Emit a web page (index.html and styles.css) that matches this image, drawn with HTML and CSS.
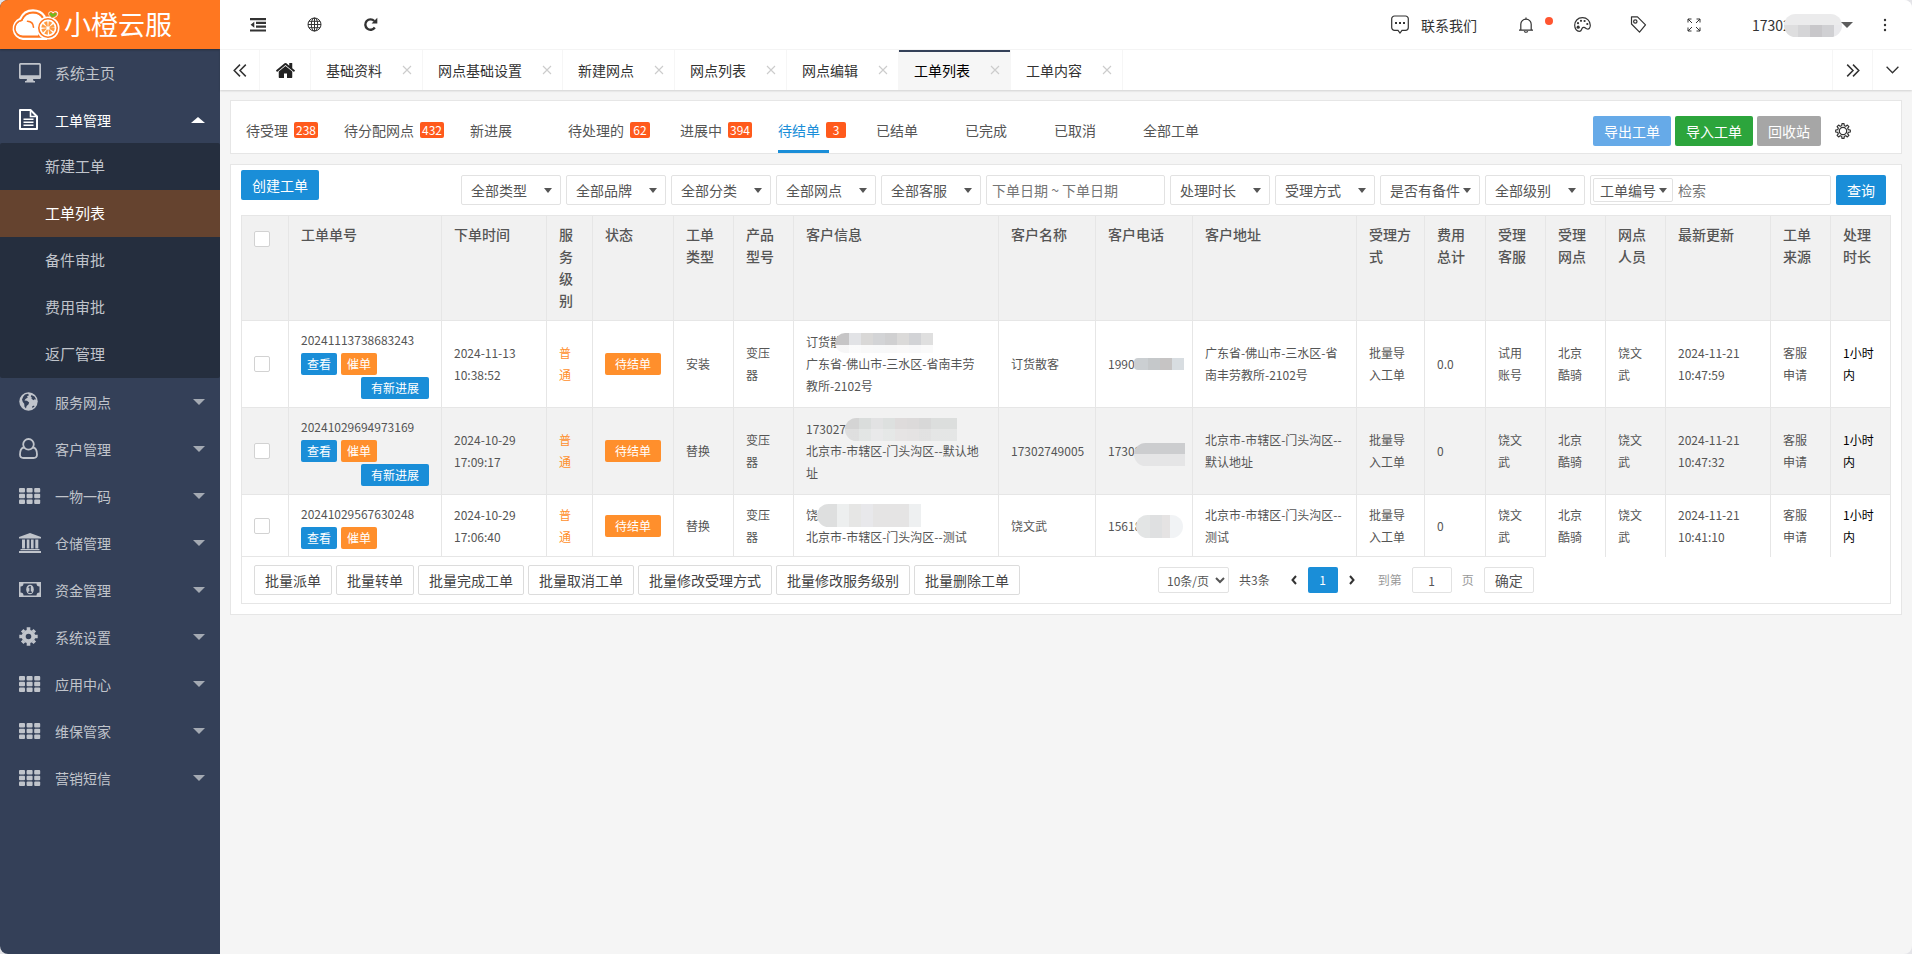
FILE: index.html
```html
<!DOCTYPE html>
<html lang="zh-CN">
<head>
    <meta charset="UTF-8">
    <meta name="viewport" content="width=device-width, initial-scale=1.0">
    <title>工单列表 | 小橙云服</title>
    <link rel="stylesheet" href="styles.css">
</head>
<body>
    <!-- shared icons -->
    <svg class="sprite" aria-hidden="true">
        <symbol id="i-grid" viewBox="0 0 22 16">
            <rect x="0" y="0" width="6" height="4.6" rx="1"/><rect x="7.6" y="0" width="6" height="4.6" rx="1"/><rect x="15.2" y="0" width="6" height="4.6" rx="1"/>
            <rect x="0" y="5.7" width="6" height="4.6" rx="1"/><rect x="7.6" y="5.7" width="6" height="4.6" rx="1"/><rect x="15.2" y="5.7" width="6" height="4.6" rx="1"/>
            <rect x="0" y="11.4" width="6" height="4.6" rx="1"/><rect x="7.6" y="11.4" width="6" height="4.6" rx="1"/><rect x="15.2" y="11.4" width="6" height="4.6" rx="1"/>
        </symbol>
        <symbol id="i-close" viewBox="0 0 10 10">
            <path d="M1 1l8 8M9 1L1 9" fill="none" stroke="currentColor" stroke-width="1.1"/>
        </symbol>
    </svg>

    <div class="app">
        <aside class="sidebar">
            <a href="#" class="logo">
                <svg width="50" height="32" viewBox="0 0 50 32" fill="none">
                    <path d="M12 29.5a10 10 0 0 1-2.5-19.3C12 4.5 17 1.8 22 1.8c5 0 8.800 2.200 11.200 5.700" stroke="#fff" stroke-width="3" stroke-linecap="round"/>
                    <path d="M12 29.500H36" stroke="#fff" stroke-width="3"/>
                    <path d="M12 26.500a7.300 7.300 0 0 1-.5-14.600C13 7 17.500 4.500 22 4.500c4 0 7.500 1.800 9.300 5.200L27 26.500z" fill="#fff"/>
                    <path d="M12 28a8.500 8.500 0 0 1-1.500-16.800C12.800 6 17.500 3.400 22 3.400c4.500 0 8 2 10.300 5.500M12 28h20M16.500 12.300c3.500.2 5.800 2.500 6 6" stroke="#ff7720" stroke-width="1.600" stroke-linecap="round"/>
                    <circle cx="37" cy="19" r="11.500" fill="#fff"/>
                    <circle cx="37" cy="19" r="9.200" fill="#fff" stroke="#ff7720" stroke-width="1.600"/>
                    <circle cx="37" cy="19" r="4.200" stroke="#ff9a40" stroke-width="5" stroke-dasharray="2.300 1"/>
                    <path d="M41 9.500c-4-2.500-5-6 -2-7 1-.4 2.500 0 3 .8 1.500-1.500 4-1.500 5 .2 1 2.500-1.500 5.500-6 6z" fill="#fff"/>
                    <path d="M41 8.500c-3-2-3.500-4-2-5 1.500-.6 2.500.5 3 1.500 1-1.800 3-1.800 3.800-.8.8 1.500-1.300 3.800-4.800 4.300z" fill="#6fbb1f" stroke="#ff7720" stroke-width=".8"/>
                </svg>
                <span class="logo-text">小橙云服</span>
            </a>
            <nav>
                <ul class="menu">
                    <li><a href="#" class="menu-item menu-home">
                        <svg width="22" height="20" viewBox="0 0 22 20"><path fill-rule="evenodd" d="M1.500 0h19A1.500 1.500 0 0 1 22 1.500v13a1.500 1.500 0 0 1-1.500 1.500H14l.6 2H16v1.500H6V18h1.400l.6-2H1.500A1.500 1.500 0 0 1 0 14.500v-13A1.500 1.500 0 0 1 1.500 0zM1.700 1.700v10.600h18.600V1.700z"/></svg>
                        <span>系统主页</span></a></li>
                    <li>
                        <a href="#" class="menu-item open">
                            <svg width="19" height="21" viewBox="0 0 19 21" fill="none" stroke="currentColor" stroke-width="2"><path d="M1 1h10.500L18 7.500V20H1z" stroke-linejoin="round"/><path d="M11.500 1v6.500H18" stroke-width="1.600"/><path d="M4.500 10.200h10M4.500 13.200h10M4.500 16.200h10" stroke-width="1.600"/></svg>
                            <span>工单管理</span><i class="caret"></i></a>
                        <ul class="submenu">
                            <li><a href="#">新建工单</a></li>
                            <li><a href="#" class="active">工单列表</a></li>
                            <li><a href="#">备件审批</a></li>
                            <li><a href="#">费用审批</a></li>
                            <li><a href="#">返厂管理</a></li>
                        </ul>
                    </li>
                    <li><a href="#" class="menu-item">
                        <svg width="19" height="19" viewBox="0 0 19 19"><circle cx="9.500" cy="9.500" r="9.200"/><path class="cut" d="M6 2.500l3-.8 1 1.500-2 1 .8 1.300L6.500 7l-1 1.500 2.500.3 2.200 1.700-.8 2-1.800 1.500-.6 2.500-1.500-1.800-.3-3L3.800 10 3 7.500l1.300-3zM12.500 3l3 1.500 1.700 3-1.500-.3-1.200 1-2-1.500.2-1.500-1-.7zM13 14.500l2-1 .5 1-2 1.500z"/></svg>
                        <span>服务网点</span><i class="caret"></i></a></li>
                    <li><a href="#" class="menu-item">
                        <svg width="19" height="21" viewBox="0 0 19 21" fill="none" stroke="currentColor" stroke-width="1.800"><circle cx="9.500" cy="6.300" r="5.300"/><path d="M4.900 9.500C2.300 10 1 13 1 16.500 1 18.700 2.300 20 4.500 20h10c2.200 0 3.500-1.300 3.500-3.500 0-3.500-1.300-6.500-3.900-7"/></svg>
                        <span>客户管理</span><i class="caret"></i></a></li>
                    <li><a href="#" class="menu-item"><svg width="22" height="16"><use href="#i-grid"/></svg><span>一物一码</span><i class="caret"></i></a></li>
                    <li><a href="#" class="menu-item">
                        <svg width="22" height="20" viewBox="0 0 22 20"><path d="M11 0l11 4v1.500H0V4zM3 6.500h3v9H3zM7.800 6.500h2.600v9H7.800zM12 6.500h2.600v9H12zM16.300 6.500h3v9h-3zM1.500 16h19v1.300h-19zM0 18h22v2H0z"/></svg>
                        <span>仓储管理</span><i class="caret"></i></a></li>
                    <li><a href="#" class="menu-item">
                        <svg width="22" height="15" viewBox="0 0 22 15"><path fill-rule="evenodd" d="M0 0h22v15H0zM4.500 1.500a3 3 0 0 1-3 3v6a3 3 0 0 1 3 3h13a3 3 0 0 1 3-3v-6a3 3 0 0 1-3-3z"/><ellipse cx="11" cy="7.500" rx="3.800" ry="4.800"/><path class="cut" d="M9.500 5l1.300-1h1v5.500h1V11h-3.500V9.500h1.100V5.800l-.9.400z"/></svg>
                        <span>资金管理</span><i class="caret"></i></a></li>
                    <li><a href="#" class="menu-item">
                        <svg width="19" height="19" viewBox="-9.500 -9.500 19 19"><circle r="4.800" fill="none" stroke="currentColor" stroke-width="4"/><path d="M0-9.200V-6M0 9.200V6M-9.200 0H-6M9.200 0H6M-6.300-6.300L-4.500-4.500M6.300 6.300L4.500 4.500M-6.300 6.300L-4.500 4.500M6.300-6.300L4.500-4.500" stroke="currentColor" stroke-width="3.600"/></svg>
                        <span>系统设置</span><i class="caret"></i></a></li>
                    <li><a href="#" class="menu-item"><svg width="22" height="16"><use href="#i-grid"/></svg><span>应用中心</span><i class="caret"></i></a></li>
                    <li><a href="#" class="menu-item"><svg width="22" height="16"><use href="#i-grid"/></svg><span>维保管家</span><i class="caret"></i></a></li>
                    <li><a href="#" class="menu-item"><svg width="22" height="16"><use href="#i-grid"/></svg><span>营销短信</span><i class="caret"></i></a></li>
                </ul>
            </nav>
        </aside>

        <div class="main">
            <header class="topbar">
                <div class="tools">
                    <button aria-label="收起菜单"><svg width="16" height="14" viewBox="0 0 16 14"><path d="M0 0h16v2.200H0zM6 3.800h10V6H6zM6 7.600h10v2.200H6zM0 11.400h16v2.200H0zM4.300 3.800v6L.6 6.800z"/></svg></button>
                    <button aria-label="前台"><svg width="15" height="15" viewBox="0 0 15 15" fill="none" stroke="currentColor"><circle cx="7.500" cy="7.500" r="6.500"/><ellipse cx="7.500" cy="7.500" rx="3.200" ry="6.500"/><path d="M1 7.500h13M7.500 1v13M2 4.300h11M2 10.700h11"/></svg></button>
                    <button aria-label="刷新"><svg width="15" height="15" viewBox="0 0 15 15"><path d="M11.800 10.500A5.200 5.200 0 1 1 11.300 4" fill="none" stroke="currentColor" stroke-width="2.400"/><path d="M14.300 .8v5.700H8.600z"/></svg></button>
                </div>
                <div class="tools tools-right">
                    <a href="#" class="contact">
                        <svg width="18" height="19" viewBox="0 0 18 19" fill="none" stroke="currentColor" stroke-width="1.200"><path d="M3.500 1h11A2.800 2.800 0 0 1 17.300 3.800v8.700a2.800 2.800 0 0 1-2.800 2.800H11L9 18l-2-2.700H3.500A2.800 2.800 0 0 1 .7 12.500V3.800A2.800 2.800 0 0 1 3.500 1z"/><path d="M4 8h2M8 8h2M12 8h2" stroke-width="2"/></svg>
                        联系我们</a>
                    <button class="bell" aria-label="消息"><svg width="16" height="16" viewBox="0 0 16 16" fill="none" stroke="currentColor" stroke-width="1.200"><path d="M1 13.200h14M2.800 13V7.300a5.200 5.200 0 0 1 10.400 0V13M8 2V.5M6.300 14.200c.5 1.400 2.900 1.400 3.400 0"/></svg><i class="dot"></i></button>
                    <button aria-label="主题"><svg width="17" height="15" viewBox="0 0 17 15"><path d="M8.500.7C3.500.7.700 4.200.700 8.300c0 3.500 2 6 4.600 6 2.300 0 2-1.700 2.800-3 1.300-2 3-.5 4.600.5 2 1 3.600-.7 3.600-3.500 0-4.500-3.300-7.600-7.800-7.600z" fill="none" stroke="currentColor" stroke-width="1.200"/><circle cx="4.200" cy="10.200" r="1.600"/><circle cx="4" cy="6.200" r="1.100"/><circle cx="7" cy="3.800" r="1.100"/><circle cx="10.600" cy="4" r="1.100"/><circle cx="13.300" cy="7" r="1.100"/></svg></button>
                    <button aria-label="便签"><svg width="17" height="17" viewBox="0 0 17 17" fill="none" stroke="currentColor" stroke-width="1.200"><path d="M1.500.8h6l8 8-6 7.400-8-8.200z" stroke-linejoin="round"/><circle cx="5.300" cy="5.500" r="1.700"/></svg></button>
                    <button aria-label="全屏"><svg width="14" height="14" viewBox="0 0 14 14" fill="none" stroke="currentColor"><path d="M1 4.500V1h3.500M1 1l4 4M9.500 1H13v3.500M13 1L9 5M1 9.500V13h3.500M1 13l4-4M9.500 13H13V9.500M13 13L9 9"/></svg></button>
                    <a href="#" class="user"><span class="masked">17302<i class="mosaic m-user"></i></span><i class="caret"></i></a>
                    <button class="more" aria-label="更多"><svg width="4" height="14" viewBox="0 0 4 14"><circle cx="2" cy="2" r="1.200"/><circle cx="2" cy="7" r="1.200"/><circle cx="2" cy="12" r="1.200"/></svg></button>
                </div>
            </header>

            <div class="tabbar">
                <button class="tab-ctrl" aria-label="向左"><svg width="14" height="13" viewBox="0 0 14 13" fill="none" stroke="currentColor" stroke-width="1.500"><path d="M7 .6L1.200 6.500 7 12.400M12.800.6L7 6.500l5.800 5.900"/></svg></button>
                <a href="#" class="tab tab-home" aria-label="首页"><svg width="21" height="21" viewBox="0 0 1792 1792"><path d="M1472 992v480q0 26-19 45t-45 19h-384v-384h-256v384h-384q-26 0-45-19t-19-45v-480q0-1 .5-3t.5-3l575-474 575 474q1 2 1 6zm223-69l-62 74q-8 9-21 11h-3q-13 0-21-7l-692-577-692 577q-12 8-24 7-13-2-21-11l-62-74q-8-10-7-23.500t11-21.500l719-599q32-26 76-26t76 26l244 204v-195q0-14 9-23t23-9h192q14 0 23 9t9 23v408l219 182q10 8 11 21.500t-7 23.500z"/></svg></a>
                <a href="#" class="tab">基础资料<svg width="10" height="10"><use href="#i-close"/></svg></a>
                <a href="#" class="tab">网点基础设置<svg width="10" height="10"><use href="#i-close"/></svg></a>
                <a href="#" class="tab">新建网点<svg width="10" height="10"><use href="#i-close"/></svg></a>
                <a href="#" class="tab">网点列表<svg width="10" height="10"><use href="#i-close"/></svg></a>
                <a href="#" class="tab">网点编辑<svg width="10" height="10"><use href="#i-close"/></svg></a>
                <a href="#" class="tab active">工单列表<svg width="10" height="10"><use href="#i-close"/></svg></a>
                <a href="#" class="tab">工单内容<svg width="10" height="10"><use href="#i-close"/></svg></a>
                <div class="tab-end">
                    <button class="tab-ctrl" aria-label="向右"><svg width="14" height="13" viewBox="0 0 14 13" fill="none" stroke="currentColor" stroke-width="1.500"><path d="M1.200.6L7 6.500l-5.800 5.900M7 .6l5.800 5.900L7 12.400"/></svg></button>
                    <button class="tab-ctrl" aria-label="展开"><svg width="13" height="8" viewBox="0 0 13 8" fill="none" stroke="currentColor" stroke-width="1.300"><path d="M.6.8l5.900 6 5.900-6"/></svg></button>
                </div>
            </div>

            <main class="content">
                <section class="card status-card">
                    <nav class="status-tabs">
                        <a href="#">待受理<span class="slot"><b>238</b></span></a>
                        <a href="#">待分配网点<span class="slot"><b>432</b></span></a>
                        <a href="#">新进展<span class="slot"></span></a>
                        <a href="#">待处理的<span class="slot"><b>62</b></span></a>
                        <a href="#">进展中<span class="slot"><b>394</b></span></a>
                        <a href="#" class="active">待结单<span class="slot"><b>3</b></span></a>
                        <a href="#" class="plain">已结单</a>
                        <a href="#" class="plain">已完成</a>
                        <a href="#" class="plain">已取消</a>
                        <a href="#" class="plain">全部工单</a>
                    </nav>
                    <div class="actions">
                        <button class="btn btn-export">导出工单</button>
                        <button class="btn btn-import">导入工单</button>
                        <button class="btn btn-recycle">回收站</button>
                        <button class="btn-set" aria-label="设置"><svg width="16" height="16" viewBox="-8 -8 16 16" fill="none" stroke="currentColor" stroke-width="1.200"><circle r="3.700"/><path d="M-1.300-5.300L-1-7.300H1L1.300-5.300 2.800-4.700 4.400-5.900 5.900-4.400 4.700-2.800 5.300-1.300 7.300-1V1L5.300 1.300 4.700 2.800 5.900 4.400 4.400 5.900 2.800 4.700 1.300 5.300 1 7.300H-1L-1.300 5.300-2.800 4.700-4.400 5.900-5.900 4.400-4.700 2.800-5.300 1.300-7.300 1V-1L-5.300-1.300-4.700-2.800-5.900-4.400-4.400-5.900-2.800-4.700z" stroke-linejoin="round"/></svg></button>
                    </div>
                </section>

                <section class="card list-card">
                    <div class="toolbar">
                        <button class="btn btn-primary">创建工单</button>
                        <form class="filters">
                            <select aria-label="类型"><option>全部类型</option></select>
                            <select aria-label="品牌"><option>全部品牌</option></select>
                            <select aria-label="分类"><option>全部分类</option></select>
                            <select aria-label="网点"><option>全部网点</option></select>
                            <select aria-label="客服"><option>全部客服</option></select>
                            <input type="text" class="date" aria-label="下单日期" placeholder="下单日期 ~ 下单日期">
                            <select aria-label="处理时长"><option>处理时长</option></select>
                            <select aria-label="受理方式"><option>受理方式</option></select>
                            <select aria-label="备件"><option>是否有备件</option></select>
                            <select aria-label="级别"><option>全部级别</option></select>
                            <div class="search">
                                <select aria-label="检索字段"><option>工单编号</option></select>
                                <input type="text" aria-label="检索" placeholder="检索">
                            </div>
                            <button type="button" class="btn btn-primary">查询</button>
                        </form>
                    </div>

                    <table class="orders">
                        <colgroup>
                            <col class="w-check"><col class="w-no"><col class="w-time"><col class="w-level"><col class="w-state">
                            <col class="w-s"><col class="w-s"><col><col class="w-name"><col class="w-name"><col class="w-addr">
                            <col class="w-way"><col class="w-cost"><col class="w-s"><col class="w-s"><col class="w-s"><col class="w-time"><col class="w-s"><col class="w-s">
                        </colgroup>
                        <thead>
                            <tr>
                                <th><input type="checkbox" aria-label="全选"></th>
                                <th>工单单号</th><th>下单时间</th><th>服务级别</th><th>状态</th><th>工单类型</th><th>产品型号</th>
                                <th>客户信息</th><th>客户名称</th><th>客户电话</th><th>客户地址</th><th>受理方式</th><th>费用总计</th>
                                <th>受理客服</th><th>受理网点</th><th>网点人员</th><th>最新更新</th><th>工单来源</th><th>处理时长</th>
                            </tr>
                        </thead>
                        <tbody>
                            <tr>
                                <td><input type="checkbox" aria-label="选择 20241113738683243"></td>
                                <td><div class="order">20241113738683243
                                    <div class="order-btns"><button class="tag blue">查看</button><button class="tag">催单</button></div>
                                    <button class="tag wide blue">有新进展</button></div></td>
                                <td>2024-11-13 10:38:52</td>
                                <td class="level">普通</td>
                                <td><span class="tag wide">待结单</span></td>
                                <td>安装</td>
                                <td>变压器</td>
                                <td><span class="masked">订货散<i class="mosaic m-info1"></i></span><br>广东省-佛山市-三水区-省南丰劳教所-2102号</td>
                                <td class="one-line">订货散客</td>
                                <td><span class="masked">19902<i class="mosaic m-tel1"></i></span></td>
                                <td>广东省-佛山市-三水区-省南丰劳教所-2102号</td>
                                <td>批量导入工单</td>
                                <td>0.0</td>
                                <td>试用账号</td>
                                <td>北京酷骑</td>
                                <td>饶文武</td>
                                <td>2024-11-21 10:47:59</td>
                                <td>客服申请</td>
                                <td class="cost-time">1小时内</td>
                            </tr>
                            <tr>
                                <td><input type="checkbox" aria-label="选择 20241029694973169"></td>
                                <td><div class="order">20241029694973169
                                    <div class="order-btns"><button class="tag blue">查看</button><button class="tag">催单</button></div>
                                    <button class="tag wide blue">有新进展</button></div></td>
                                <td>2024-10-29 17:09:17</td>
                                <td class="level">普通</td>
                                <td><span class="tag wide">待结单</span></td>
                                <td>替换</td>
                                <td>变压器</td>
                                <td><span class="masked">173027<i class="mosaic m-info2"></i></span><br>北京市-市辖区-门头沟区--默认地址</td>
                                <td class="one-line">17302749005</td>
                                <td><span class="masked">17302<i class="mosaic m-tel2"></i></span></td>
                                <td>北京市-市辖区-门头沟区--默认地址</td>
                                <td>批量导入工单</td>
                                <td>0</td>
                                <td>饶文武</td>
                                <td>北京酷骑</td>
                                <td>饶文武</td>
                                <td>2024-11-21 10:47:32</td>
                                <td>客服申请</td>
                                <td class="cost-time">1小时内</td>
                            </tr>
                            <tr>
                                <td><input type="checkbox" aria-label="选择 20241029567630248"></td>
                                <td><div class="order">20241029567630248
                                    <div class="order-btns"><button class="tag blue">查看</button><button class="tag">催单</button></div></div></td>
                                <td>2024-10-29 17:06:40</td>
                                <td class="level">普通</td>
                                <td><span class="tag wide">待结单</span></td>
                                <td>替换</td>
                                <td>变压器</td>
                                <td><span class="masked">饶<i class="mosaic m-info3"></i></span><br>北京市-市辖区-门头沟区--测试</td>
                                <td class="one-line">饶文武</td>
                                <td><span class="masked">15618<i class="mosaic m-tel3"></i></span></td>
                                <td>北京市-市辖区-门头沟区--测试</td>
                                <td>批量导入工单</td>
                                <td>0</td>
                                <td>饶文武</td>
                                <td>北京酷骑</td>
                                <td>饶文武</td>
                                <td>2024-11-21 10:41:10</td>
                                <td>客服申请</td>
                                <td class="cost-time">1小时内</td>
                            </tr>
                        </tbody>
                    </table>

                    <div class="table-foot">
                        <div class="batch">
                            <button class="btn btn-plain">批量派单</button>
                            <button class="btn btn-plain">批量转单</button>
                            <button class="btn btn-plain">批量完成工单</button>
                            <button class="btn btn-plain">批量取消工单</button>
                            <button class="btn btn-plain">批量修改受理方式</button>
                            <button class="btn btn-plain">批量修改服务级别</button>
                            <button class="btn btn-plain">批量删除工单</button>
                        </div>
                        <div class="pager">
                            <select aria-label="每页条数"><option>10条/页</option></select>
                            <span class="total">共3条</span>
                            <button class="arrow" aria-label="上一页"><svg width="6" height="10" viewBox="0 0 6 10" fill="none" stroke="currentColor" stroke-width="2"><path d="M5 1L1.500 5 5 9"/></svg></button>
                            <button class="current">1</button>
                            <button class="arrow" aria-label="下一页"><svg width="6" height="10" viewBox="0 0 6 10" fill="none" stroke="currentColor" stroke-width="2"><path d="M1 1l3.500 4L1 9"/></svg></button>
                            <label for="page-no">到第</label>
                            <input type="text" id="page-no" value="1">
                            <label for="page-no">页</label>
                            <button class="go">确定</button>
                        </div>
                    </div>
                </section>
            </main>
        </div>
    </div>
</body>
</html>
```
FILE: styles.css
```css
:root {
    --blue: #1a8ed8;
    --orange: #ff8f2c;
    --red: #ff5a1c;
    --side: #344058;
    --side-dark: #252e3e;
    --line: #e6e6e6;
    --text: #555;
}

* {
    box-sizing: border-box;
}

body {
    margin: 0;
    font: 14px/22px "Noto Sans CJK SC", sans-serif;
    color: var(--text);
    background-color: #e4e4e8;
}

ul {
    list-style: none;
    margin: 0;
    padding: 0;
}

a {
    color: inherit;
    text-decoration: none;
}

button, input, select {
    font: inherit;
    color: inherit;
    margin: 0;
}

button {
    border: none;
    background: none;
    padding: 0;
    cursor: pointer;
}

svg {
    fill: currentColor;
    flex: none;
}

svg[fill="none"] {
    fill: none;
}

.sprite {
    display: none;
}

.app {
    display: flex;
    min-height: 100vh;
    border-radius: 8px;
    overflow: hidden;
    background-color: #f5f5f5;
}

/* sidebar */
.sidebar {
    width: 220px;
    flex: none;
    background-color: var(--side);
    color: #c0c4cb;
}

.logo {
    display: flex;
    align-items: center;
    gap: 3px;
    height: 49px;
    padding-left: 11px;
    background-color: #ff7720;
    color: #fff;
    box-shadow: 0 1px 2px rgba(0, 0, 0, 0.3);
}

.logo-text {
    font-size: 27px;
    line-height: 46px;
    padding-bottom: 2px;
}

.menu-item {
    display: flex;
    align-items: center;
    height: 47px;
    padding: 0 15px 0 19px;
}

.menu-item span {
    flex: 1;
    padding-top: 1px;
}

.menu-item svg {
    margin-right: 14px;
}

.menu-item svg[width="19"] {
    margin-right: 17px;
}

.menu-home {
    font-size: 15px;
}

.menu-item.open {
    color: #fff;
}

.cut {
    fill: var(--side);
}

.caret {
    border: 6px solid transparent;
    border-top-color: currentColor;
    border-bottom: none;
    opacity: 0.8;
}

.open .caret {
    border-top: none;
    border-bottom: 6px solid #fff;
    opacity: 1;
    border-left-width: 7px;
    border-right-width: 7px;
}

.submenu {
    background-color: var(--side-dark);
    font-size: 15px;
    border-radius: 2px;
}

.submenu a {
    display: block;
    height: 47px;
    padding-left: 45px;
    line-height: 46px;
}

.submenu .active {
    background-color: #65432f;
    color: #fff;
}

.main {
    flex: 1;
    min-width: 0;
}

/* top bar */
.topbar {
    display: flex;
    justify-content: space-between;
    height: 50px;
    padding: 0 10px;
    background-color: #fff;
    border-bottom: 1px solid #f6f6f6;
    color: #333;
}

.tools {
    display: flex;
    align-items: center;
}

.tools button {
    display: flex;
    align-items: center;
    justify-content: center;
    width: 56px;
    height: 49px;
}

.contact {
    display: flex;
    align-items: center;
    gap: 12px;
    margin-right: 21px;
}

.tools .bell {
    position: relative;
}

.dot {
    position: absolute;
    top: 17px;
    right: 1px;
    width: 8px;
    height: 8px;
    border-radius: 50%;
    background-color: #ff5530;
}

.user {
    display: flex;
    align-items: center;
    justify-content: space-between;
    width: 101px;
    margin-left: 30px;
}

.tools .more {
    width: 35px;
    margin-left: 14px;
}

.tabbar {
    display: flex;
    height: 40px;
    background-color: #fff;
    color: #333;
    box-shadow: 0 1px 2px rgba(0, 0, 0, 0.15);
}

.tab-ctrl {
    display: flex;
    align-items: center;
    justify-content: center;
    width: 40px;
    border-right: 1px solid #f6f6f6;
}

.tab {
    display: flex;
    align-items: center;
    gap: 20px;
    padding: 0 10px 0 15px;
    border-right: 1px solid #f6f6f6;
    white-space: nowrap;
}

.tab svg {
    color: #ccc;
}

.tab-home {
    width: 51px;
    padding: 0;
    justify-content: center;
}

.tab-home svg {
    color: #222;
}

.tab.active {
    background-color: #f6f6f6;
    box-shadow: inset 0 2px 0 #334058;
    color: #000;
}

.tab-end {
    display: flex;
    margin-left: auto;
}

.tab-end .tab-ctrl {
    border-right: none;
    border-left: 1px solid #f6f6f6;
}

/* content */
.content {
    padding: 10px;
}

.card {
    background-color: #fff;
    border: 1px solid var(--line);
    margin-bottom: 10px;
}

.status-card {
    display: flex;
    justify-content: space-between;
    padding: 0 50px 0 15px;
    height: 54px;
}

.status-tabs {
    display: flex;
    white-space: nowrap;
}

.status-tabs a {
    display: flex;
    align-items: center;
    height: 52px;
    padding-top: 6px;
}

.slot {
    display: flex;
    width: 56px;
    padding-left: 6px;
}

.slot b {
    min-width: 20px;
    padding: 0 2px;
    border-radius: 2px;
    background-color: var(--red);
    color: #fff;
    font-size: 12px;
    font-weight: 400;
    line-height: 16px;
    text-align: center;
}

.status-tabs .active {
    color: var(--blue);
    background: linear-gradient(var(--blue), var(--blue)) left bottom / 51px 3px no-repeat;
}

.plain {
    margin-right: 47px;
}

.actions {
    display: flex;
    align-items: center;
    gap: 4px;
    padding-top: 8px;
}

.btn {
    height: 30px;
    padding: 0 11px;
    border-radius: 2px;
    color: #fff;
    line-height: 28px;
    white-space: nowrap;
}

.btn-export {
    background-color: #66aae8;
}

.btn-import {
    background-color: #2ca53c;
}

.btn-recycle {
    background-color: #a6a6a6;
}

.btn-set {
    display: flex;
    margin-left: 10px;
    color: #333;
}

.btn-primary {
    background-color: var(--blue);
}

.btn-plain {
    padding: 0 10px;
    background-color: #fff;
    border: 1px solid #dcdcdc;
    color: #444;
    line-height: 26px;
}

.list-card {
    padding: 5px 10px 10px;
}

.toolbar {
    display: flex;
    justify-content: space-between;
    align-items: flex-start;
    padding-bottom: 10px;
}

.filters {
    display: flex;
    gap: 5px;
    padding: 5px 5px 0 0;
}

.filters select, .filters input, .search {
    height: 30px;
    border: 1px solid #e2e2e2;
    border-radius: 2px;
    background-color: #fff;
}

.filters select {
    appearance: none;
    width: 100px;
    padding: 0 0 0 9px;
    background: #fff url("data:image/svg+xml,%3Csvg xmlns='http://www.w3.org/2000/svg' width='8' height='5'%3E%3Cpath d='M0 0h8L4 5z' fill='%23555'/%3E%3C/svg%3E") right 8px center no-repeat;
}

.filters .date {
    width: 179px;
    padding: 0 5px;
}

.filters input::placeholder {
    color: #757575;
    opacity: 1;
}

.search {
    display: flex;
    align-items: center;
    width: 241px;
    padding-left: 2px;
}

.search select {
    width: 80px;
    height: 24px;
    padding-left: 6px;
    background-position: right 5px center;
}

.search input {
    flex: 1;
    min-width: 0;
    height: 28px;
    padding: 0 5px;
    border: none;
}

/* orders table */
.orders {
    width: 100%;
    table-layout: fixed;
    border-collapse: collapse;
}

.w-check { width: 47px; }
.w-no { width: 153px; }
.w-time { width: 105px; }
.w-level { width: 46px; }
.w-state { width: 81px; }
.w-s { width: 60px; }
.w-name { width: 97px; }
.w-addr { width: 164px; }
.w-way { width: 68px; }
.w-cost { width: 61px; }

.orders th, .orders td {
    padding: 8px 12px;
    border: 1px solid var(--line);
    text-align: left;
    word-break: break-word;
}

.orders th {
    padding: 7px 12px 9px;
    background-color: #f1f1f1;
    font-weight: 500;
    vertical-align: top;
}

.orders td {
    font-size: 12px;
}

.orders .one-line {
    white-space: nowrap;
}

.orders tr:nth-child(even) td {
    background-color: #f2f2f2;
}

/* the footer joins the last cells without a line */
.orders tbody tr:last-child td {
    padding-bottom: 7px;
}

.orders tbody tr:last-child td:nth-child(n+15) {
    border-bottom: none;
}

.orders input {
    appearance: none;
    display: block;
    width: 16px;
    height: 16px;
    border: 1px solid #d2d2d2;
    border-radius: 2px;
    background-color: #fff;
}

.orders th input {
    margin-top: 8px;
}

.order {
    display: flex;
    flex-direction: column;
    gap: 2px;
}

.order-btns {
    display: flex;
    gap: 4px;
}

.tag {
    display: inline-block;
    height: 22px;
    padding: 0 6px;
    border-radius: 2px;
    background-color: var(--orange);
    color: #fff;
    line-height: 22px;
    white-space: nowrap;
}

.tag.wide {
    padding: 0 10px;
}

.tag.blue {
    background-color: var(--blue);
}

.order .wide {
    align-self: flex-end;
}

td .tag.wide {
    vertical-align: top;
}

.orders .level {
    color: var(--orange);
}

.orders .cost-time {
    color: #000;
}

/* hidden customer data */
.masked {
    position: relative;
}

.mosaic {
    position: absolute;
    left: 100%;
    top: 50%;
    height: 23px;
    margin: -11px 0 0 -7px;
    border-radius: 12px 0 0 12px;
    background:
        linear-gradient(transparent 50%, rgba(255, 255, 255, 0.25) 50%),
        linear-gradient(90deg, #d4d4d4 14px, #dadddc 14px 26px, #e2e2e3 26px 38px, #dde0df 38px 50px, #dedbdb 50px 62px, #dcdada 62px 74px, #d8d8d8 74px 86px, #dcdedd 86px);
}

.m-info1 {
    width: 98px;
    height: 20px;
    margin-top: -9px;
    background:
        linear-gradient(transparent 60%, rgba(255, 255, 255, 0.85) 60%),
        linear-gradient(90deg, #c6c5c6 14px, #e2e3e6 14px 26px, #d9d8d7 26px 38px, #d3d4d6 38px 50px, #d0d0d1 50px 62px, #dbdad9 62px 74px, #d2d3d6 74px 86px, #dfdfdf 86px);
}

.m-info2 {
    width: 112px;
    margin-left: -1px;
}

.m-info3 {
    width: 104px;
    margin-left: -1px;
    background: linear-gradient(90deg, #dedfdf 20px, #edefef 20px 32px, #e6e6e5 32px 44px, #e8e8eb 44px 56px, #e5e4e4 56px 92px, #eef0f1 92px);
}

.m-tel1 {
    width: 50px;
    height: 12px;
    margin-top: -6px;
    border-radius: 4px 0 0 4px;
    background: linear-gradient(90deg, #cbcfd2 14px, #c5c8ca 14px 26px, #c6c4c4 26px 38px, #d8dde1 38px);
}

.m-tel2 {
    width: 51px;
    margin-top: -8px;
    background: linear-gradient(#cccdcf 50%, #e5e5e6 50%);
}

.m-tel3 {
    width: 47px;
    margin-left: -5px;
    border-radius: 12px;
    background: linear-gradient(90deg, #e3e5e5 14px, #dfe0e1 14px 26px, #e5e3e3 26px 34px, #f1f3f5 34px);
}

.m-user {
    width: 58px;
    border-radius: 12px;
    background:
        linear-gradient(#ebebec 48%, transparent 48%),
        linear-gradient(90deg, #dededf 14px, #d5d5d7 14px 26px, #c8c7ca 26px 38px, #d0d0d3 38px 50px, #e9e9ec 50px);
}

/* table footer */
.table-foot {
    display: flex;
    align-items: flex-start;
    padding: 8px 12px;
    border: 1px solid var(--line);
    border-top: none;
}

.batch {
    display: flex;
    gap: 4px;
}

.pager {
    display: flex;
    align-items: center;
    margin: 2px 0 0 138px;
    font-size: 12px;
}

.pager select, .pager input, .go {
    height: 26px;
    border: 1px solid #e2e2e2;
    border-radius: 2px;
    background-color: #fff;
}

.pager select {
    width: 71px;
    padding: 0 0 0 4px;
}

.total {
    margin: 0 10px;
}

.arrow {
    display: flex;
    align-items: center;
    justify-content: center;
    width: 28px;
    height: 26px;
    color: #333;
}

.current {
    width: 30px;
    height: 26px;
    border-radius: 2px;
    background-color: var(--blue);
    color: #fff;
}

.pager label {
    color: #999;
    margin: 0 10px;
}

.arrow + label {
    margin-left: 12px;
}

.pager input {
    width: 40px;
    text-align: center;
}

.go {
    width: 50px;
    font-size: 14px;
    line-height: 20px;
}
```
